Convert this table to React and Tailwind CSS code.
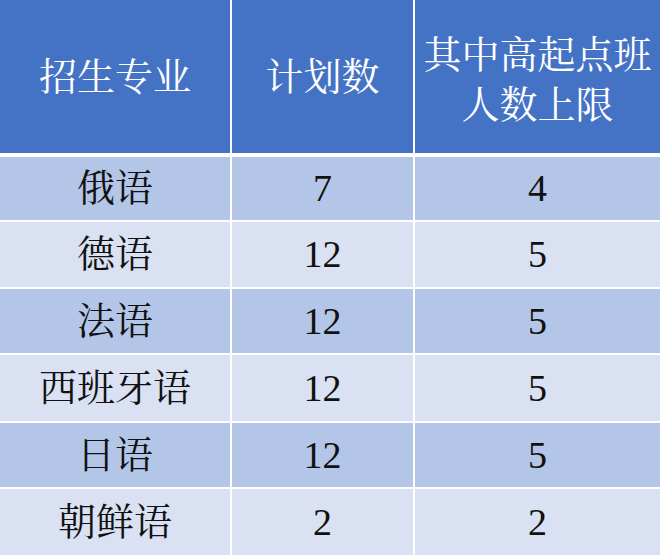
import React from "react";

const font = {
  fontFamily: '"Liberation Serif", "Noto Serif CJK SC", "Noto Sans CJK SC", serif',
};

const rows = [
  ["俄语", "7", "4", "h-[63px]", "bg-[#b4c6e7]"],
  ["德语", "12", "5", "h-[65px]", "bg-[#d9e1f2]"],
  ["法语", "12", "5", "h-[64px]", "bg-[#b4c6e7]"],
  ["西班牙语", "12", "5", "h-[66px]", "bg-[#d9e1f2]"],
  ["日语", "12", "5", "h-[64px]", "bg-[#b4c6e7]"],
  ["朝鲜语", "2", "2", "h-[66px]", "bg-[#d9e1f2]"],
];

export default function App() {
  return (
    <div
      className="w-[660px] h-[555px] bg-white flex flex-col gap-y-[2px] overflow-hidden text-[38px]"
      style={font}
    >
      <div className="grid grid-cols-[230px_181px_1fr] gap-x-[2px] h-[153px] mb-[2px] text-white">
        <div className="bg-[#4472c4] flex items-center justify-center pt-[2px]">招生专业</div>
        <div className="bg-[#4472c4] flex items-center justify-center pt-[2px]">计划数</div>
        <div className="bg-[#4472c4] flex flex-col items-center justify-center leading-[50px] pt-[6px]">
          <span>其中高起点班</span>
          <span>人数上限</span>
        </div>
      </div>
      {rows.map(([a, b, c, h, bg]) => (
        <div key={a} className={`grid grid-cols-[230px_181px_1fr] gap-x-[2px] ${h} text-[#111]`}>
          <div className={`${bg} flex items-center justify-center`}>{a}</div>
          <div className={`${bg} flex items-center justify-center`}>{b}</div>
          <div className={`${bg} flex items-center justify-center`}>{c}</div>
        </div>
      ))}
    </div>
  );
}
